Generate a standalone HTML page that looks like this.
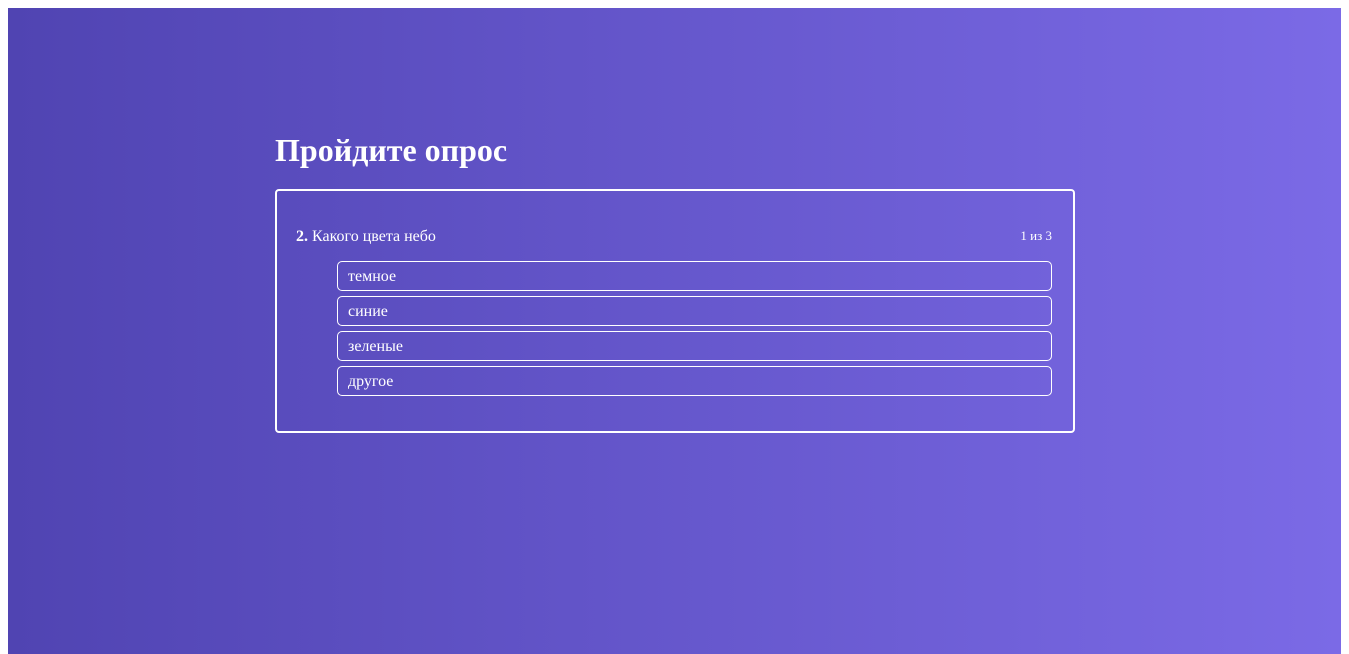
<!DOCTYPE html>
<html><head><meta charset="utf-8"><style>
html,body{margin:0;padding:0;background:#fff}
.bg{position:absolute;left:8px;top:8px;width:1333px;height:646px;background:linear-gradient(90deg,#5044b2,#7b6ae6);font-family:"Liberation Serif",serif;color:#fff}
h1{position:absolute;left:267px;top:122px;margin:0;font-size:32px;font-weight:bold;line-height:40px}
.card{position:absolute;left:267px;top:181px;width:796px;height:240px;border:2px solid #fff;border-radius:4px}
.q{position:absolute;left:19px;top:36px;font-size:16px;line-height:20px}
.n{position:absolute;right:21px;top:36px;font-size:13px;line-height:18px}
.opt{position:absolute;left:60px;width:703px;height:28px;border:1px solid #fff;border-radius:5px;font-size:16px;line-height:29px;padding-left:10px}
</style></head><body><div class="bg">
<h1>Пройдите опрос</h1>
<div class="card">
<div class="q"><b>2.</b> Какого цвета небо</div>
<div class="n">1 из 3</div>
<div class="opt" style="top:70px">темное</div>
<div class="opt" style="top:105px">синие</div>
<div class="opt" style="top:140px">зеленые</div>
<div class="opt" style="top:175px">другое</div>
</div></div></body></html>
